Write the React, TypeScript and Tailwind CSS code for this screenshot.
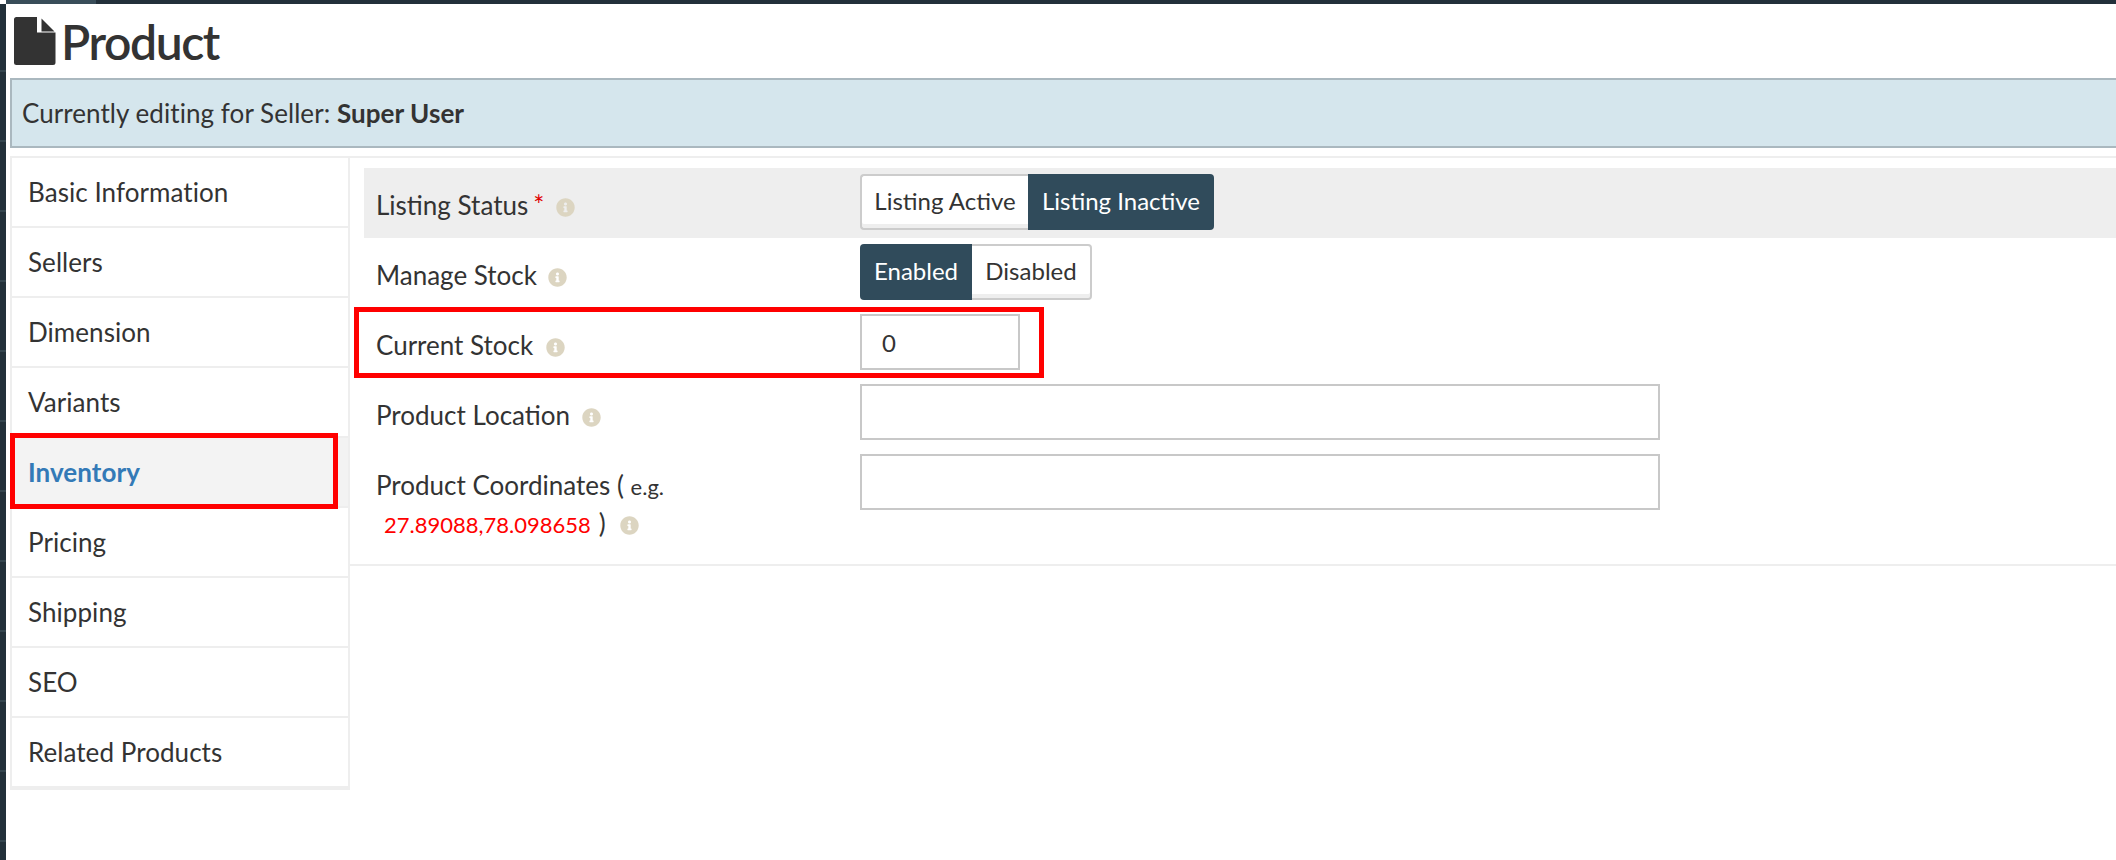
import React from 'react';
import { FaInfoCircle } from 'react-icons/fa';

const navItems = ['Basic Information', 'Sellers', 'Dimension', 'Variants', 'Inventory', 'Pricing', 'Shipping', 'SEO', 'Related Products'];

const Info: React.FC<{ className?: string }> = ({ className = 'ml-[10px]' }) => (
  <FaInfoCircle className={`inline-block text-[#dcd5c1] text-[19px] align-[-1.5px] ${className}`} />
);

const TextInput: React.FC<{ value?: string; className: string }> = ({ value, className }) => (
  <input
    readOnly
    value={value ?? ''}
    className={`h-14 border-2 border-[#c8c8c8] bg-white px-[20px] text-[24px] text-[#333] outline-none ${className}`}
  />
);

const SegButton: React.FC<{ label: string; active?: boolean; side: 'l' | 'r'; className: string }> = ({ label, active, side, className }) => (
  <div
    className={`h-14 flex items-center justify-center text-[24px] leading-none pb-[3px] ${className} ${side === 'l' ? 'rounded-l-[4px]' : 'rounded-r-[4px]'} ${
      active
        ? 'bg-[#304b5b] text-white'
        : `bg-white text-[#333] border-2 border-[#cccccc] shadow-[inset_0_-4px_0_#eeeeee] ${side === 'l' ? 'border-r-0' : 'border-l-0'}`
    }`}
  >
    {label}
  </div>
);

const Row: React.FC<{ children: React.ReactNode; className?: string }> = ({ children, className = '' }) => (
  <div className={`flex h-[70px] pt-[6px] ${className}`}>{children}</div>
);

const Label: React.FC<{ children: React.ReactNode }> = ({ children }) => (
  <div className="w-[496px] pl-3 pt-[13px] text-[26px] leading-[36px] text-[#333]">{children}</div>
);

export default function App() {
  return (
    <div className="min-h-[860px] bg-white flex flex-col overflow-hidden font-['Lato','Liberation_Sans',sans-serif]">
      <div className="flex h-1 shrink-0">
        <div className="w-[6px] bg-white" />
        <div className="w-[90px] bg-[#394d59]" />
        <div className="flex-1 bg-[#22303a]" />
      </div>
      <div className="flex flex-1">
        <div className="w-[6px] shrink-0 bg-[#22303a] flex flex-col">
          {Array.from({ length: 12 }).map((_, i) => (
            <div key={i} className={`${i === 0 ? 'h-[68px]' : 'h-[70px]'} shrink-0 border-b-2 border-[#34454f]`} />
          ))}
        </div>
        <div className="flex-1 min-w-0 pl-1">
          <div className="h-[74px] pl-1 pt-[13px] flex items-start">
            <svg width="42" height="48" viewBox="0 0 42 48" className="shrink-0">
              <path d="M2.5 0H23V15.5H41.5V45.5a2.5 2.5 0 0 1-2.5 2.5H2.5A2.5 2.5 0 0 1 0 45.5V2.5A2.5 2.5 0 0 1 2.5 0Z" fill="#333333" />
              <path d="M27.5 1.5L40.5 14.5H27.5Z" fill="#333333" />
            </svg>
            <h1 className="ml-[5px] mt-[-4px] text-[48px] leading-[58px] font-semibold tracking-[-1.4px] text-[#333]">Product</h1>
          </div>

          <div className="h-[70px] bg-[#d5e6ed] border-2 border-r-0 border-[#aab8bf] pl-[10px] flex items-center text-[26px] tracking-[0.06px] text-[#333]">
            <span>
              Currently editing for Seller: <b className="font-bold">Super User</b>
            </span>
          </div>

          <div className="mt-2 flex">
            <div className="w-[340px] shrink-0 self-start bg-[#eeeeee] border-x-2 border-t-2 border-b-4 border-[#eeeeee] flex flex-col gap-[2px]">
              {navItems.map((item) =>
                item === 'Inventory' ? (
                  <div key={item} className="relative h-[68px] bg-[#f3f3f3] pl-4 flex items-center text-[26px] tracking-[0.06px] font-bold text-[#337ab7]">
                    {item}
                    <div className="absolute -left-[2px] -top-[5px] w-[328px] h-[76px] border-[5px] border-[#ff0000]" />
                  </div>
                ) : (
                  <div key={item} className="h-[68px] bg-white pl-4 flex items-center text-[26px] tracking-[0.06px] text-[#333]">
                    {item}
                  </div>
                )
              )}
            </div>

            <div className="flex-1 min-w-0">
              <div className="h-[396px] border-t-2 border-b-2 border-[#eeeeee] pl-[14px] pt-[10px] box-content">
                <Row className="bg-[#eeeeee]">
                  <Label>
                    Listing Status<span className="text-[#e00000] text-[26px] ml-[5px]">*</span>
                    <Info className="ml-[12px]" />
                  </Label>
                  <div className="flex">
                    <SegButton label="Listing Active" side="l" className="w-[168px]" />
                    <SegButton label="Listing Inactive" active side="r" className="w-[186px]" />
                  </div>
                </Row>
                <Row>
                  <Label>
                    Manage Stock
                    <Info className="ml-[11px]" />
                  </Label>
                  <div className="flex">
                    <SegButton label="Enabled" active side="l" className="w-[112px]" />
                    <SegButton label="Disabled" side="r" className="w-[120px]" />
                  </div>
                </Row>
                <Row className="relative">
                  <Label>
                    Current Stock
                    <Info className="ml-[13px]" />
                  </Label>
                  <TextInput value="0" className="w-40" />
                  <div className="absolute -left-[10px] -top-px w-[690px] h-[71px] border-[5px] border-[#ff0000] pointer-events-none" />
                </Row>
                <Row>
                  <Label>
                    Product Location
                    <Info className="ml-[12px]" />
                  </Label>
                  <TextInput className="w-[800px]" />
                </Row>
                <Row>
                  <Label>
                    Product Coordinates ( <small className="text-[22px]">e.g.</small>
                    <br />
                    <span className="ml-2 text-[22px] text-[#ff0000]">27.89088,78.098658</span>
                    <span className="ml-2">)</span>
                    <Info className="ml-[14px]" />
                  </Label>
                  <TextInput className="w-[800px]" />
                </Row>
              </div>
            </div>
          </div>
        </div>
      </div>
    </div>
  );
}
